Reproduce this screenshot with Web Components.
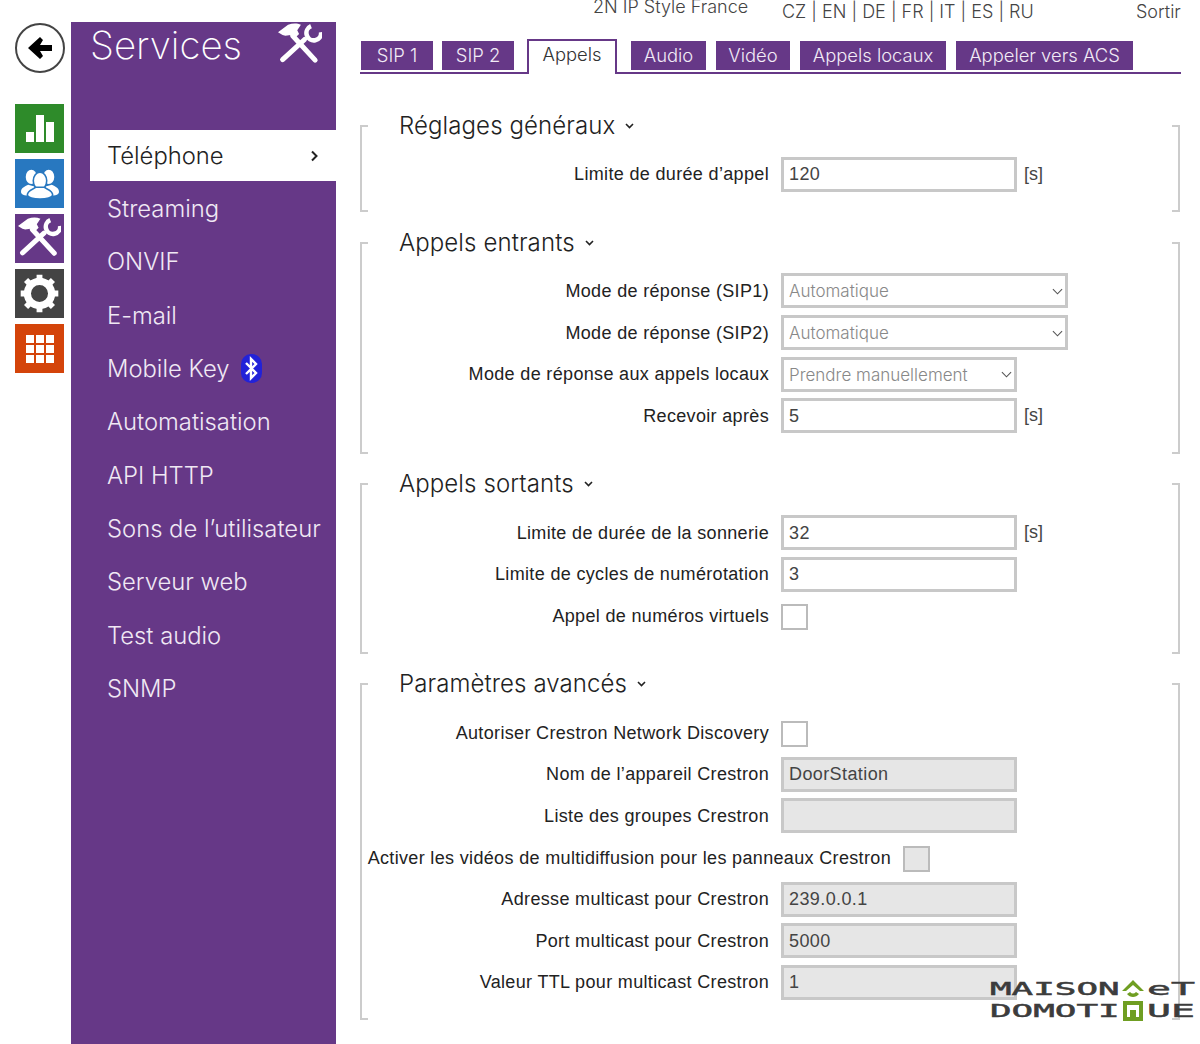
<!DOCTYPE html>
<html lang="fr">
<head>
<meta charset="utf-8">
<title>Services - Appels</title>
<style>
  html, body { margin: 0; height: 1044px; overflow: hidden; background: #fff; }
  body { display: flex; font-family: "Liberation Sans", Arial, sans-serif; color: #222; }
</style>
</head>
<body>
<x-rail></x-rail>
<x-side-nav title-text="Services"></x-side-nav>
<x-main>
  <x-top-bar></x-top-bar>
  <x-tabs></x-tabs>
  <x-section heading="Réglages généraux">
    <x-row label="Limite de durée d’appel" value="120" unit="[s]"></x-row>
  </x-section>
  <x-section heading="Appels entrants">
    <x-row label="Mode de réponse (SIP1)" value="Automatique" kind="select" size="wide"></x-row>
    <x-row label="Mode de réponse (SIP2)" value="Automatique" kind="select" size="wide"></x-row>
    <x-row label="Mode de réponse aux appels locaux" value="Prendre manuellement" kind="select"></x-row>
    <x-row label="Recevoir après" value="5" unit="[s]"></x-row>
  </x-section>
  <x-section heading="Appels sortants">
    <x-row label="Limite de durée de la sonnerie" value="32" unit="[s]"></x-row>
    <x-row label="Limite de cycles de numérotation" value="3"></x-row>
    <x-row label="Appel de numéros virtuels" kind="check"></x-row>
  </x-section>
  <x-section heading="Paramètres avancés">
    <x-row label="Autoriser Crestron Network Discovery" kind="check"></x-row>
    <x-row label="Nom de l’appareil Crestron" value="DoorStation" disabled></x-row>
    <x-row label="Liste des groupes Crestron" value="" disabled></x-row>
    <x-row label="Activer les vidéos de multidiffusion pour les panneaux Crestron" kind="check" disabled long></x-row>
    <x-row label="Adresse multicast pour Crestron" value="239.0.0.1" disabled></x-row>
    <x-row label="Port multicast pour Crestron" value="5000" disabled></x-row>
    <x-row label="Valeur TTL pour multicast Crestron" value="1" disabled></x-row>
  </x-section>
</x-main>
<x-logo></x-logo>

<script>
const TOOLS_ICON = `
  <svg viewBox="0 0 48 48" fill="currentColor" aria-hidden="true">
    <path d="M0 10 11 2c5-2 10-2 14 0l-4 6 2 4-5 5-4-4-6 1-3-1z"/>
    <path d="M16 14 40.500 40.500" fill="none" stroke="currentColor" stroke-width="5.5" stroke-linecap="round"/>
    <path d="M5 40 29 18" fill="none" stroke="currentColor" stroke-width="5.5" stroke-linecap="round"/>
    <path d="M36 3.500A8 8 0 1 0 47 10" fill="none" stroke="currentColor" stroke-width="5"/>
  </svg>`;

const GEAR_ICON = `
  <svg viewBox="0 0 48 48" aria-hidden="true">
    <circle cx="24" cy="24" r="13.500" fill="none" stroke="#fff" stroke-width="8"/>
    <path d="M24 3v8M24 37v8M3 24h8M37 24h8M9 9l6 6M33 33l6 6M39 9l-6 6M15 33l-6 6" stroke="#fff" stroke-width="6.500"/>
  </svg>`;

const USERS_ICON = `
  <svg class="users" viewBox="0 0 48 48" fill="#fff" aria-hidden="true">
    <ellipse cx="13" cy="15" rx="7" ry="9"/>
    <ellipse cx="35" cy="15" rx="7" ry="9"/>
    <path d="M0 34c0-6 6-7 9-9l8 2-2 12C7 39 0 38 0 34zM48 34c0-6-6-7-9-9l-8 2 2 12c8 0 15-1 15-5z"/>
    <ellipse cx="24" cy="20" rx="8.500" ry="11" stroke="#2878c0" stroke-width="2"/>
    <path d="M8 38c0-6 7-7 11-10h10c4 3 11 4 11 10 0 3-8 5-16 5S8 41 8 38z" stroke="#2878c0" stroke-width="2"/>
  </svg>`;

class XRail extends HTMLElement {
  constructor() {
    super();
    this.attachShadow({ mode: 'open' });
    this.shadowRoot.innerHTML = `
      <style>
        :host { display: flex; flex-direction: column; align-items: flex-start; width: 71px; flex: none; padding: 23px 0 0 15px; box-sizing: border-box; }
        .back { width: 50px; height: 50px; box-sizing: border-box; border: 2px solid #444; border-radius: 50%; display: flex; align-items: center; justify-content: center; margin-bottom: 31px; }
        .back svg { width: 26px; height: 26px; }
        .tile { width: 49px; height: 49px; margin-bottom: 6px; display: flex; align-items: center; justify-content: center; color: #fff; }
        .tile svg { width: 43px; height: 43px; }
        .tile svg.users { width: 38px; height: 38px; }
        .green { background: #2e8b2a; } .blue { background: #2878c0; }
        .purple { background: #663887; } .dark { background: #444; } .orange { background: #d4440a; }
        .grid { display: grid; grid-template-columns: repeat(3, 8px); grid-auto-rows: 8px; gap: 2px; }
        .grid i { background: #fff; }
        .bars { display: flex; align-items: flex-end; gap: 2px; height: 27px; }
        .bars i { width: 8px; background: #fff; }
      </style>
      <div class="back">
        <svg viewBox="0 0 26 26"><path d="M1 13 13 2l3 3-3 5h12v6H13l3 5-3 3z" fill="#000"/></svg>
      </div>
      <div class="tile green"><div class="bars"><i style="height:10px"></i><i style="height:27px"></i><i style="height:20px"></i></div></div>
      <div class="tile blue">${USERS_ICON}</div>
      <div class="tile purple">${TOOLS_ICON}</div>
      <div class="tile dark">${GEAR_ICON}</div>
      <div class="tile orange"><div class="grid">${'<i></i>'.repeat(9)}</div></div>
    `;
  }
}

class XSideNav extends HTMLElement {
  constructor() {
    super();
    this.attachShadow({ mode: 'open' });
    const items = ['Streaming', 'ONVIF', 'E-mail', 'Mobile Key', 'Automatisation', 'API HTTP', 'Sons de l’utilisateur', 'Serveur web', 'Test audio', 'SNMP'];
    this.shadowRoot.innerHTML = `
      <style>
        :host { display: block; width: 265px; flex: none; margin-top: 22px; background: #663887; color: #fff; height: 1022px; font-family: Inter, "Liberation Sans", sans-serif; font-weight: 300; }
        header { display: flex; justify-content: space-between; align-items: center; padding: 0 14px 0 19px; height: 46px; }
        h1 { margin: 0; font-size: 38.4px; font-weight: 200; line-height: 46px; }
        header svg { width: 44px; height: 44px; }
        nav { margin: 62px 0 0 19px; }
        .item { height: 53.35px; display: flex; align-items: center; padding-left: 17px; font-size: 23.8px; color: #f0e8f4; }
        .item.active { background: #fff; color: #222; height: 51px; margin-bottom: 0.7px; justify-content: space-between; padding-right: 17px; }
        .item.active svg { width: 9px; height: 12px; }
        .bt { width: 21px; height: 29px; margin-left: 12px; }
      </style>
      <header><h1>${this.getAttribute('title-text')}</h1>${TOOLS_ICON}</header>
      <nav>
        <div class="item active">Téléphone
          <svg viewBox="0 0 9 12"><path d="M2 1.500 6.500 6 2 10.500" fill="none" stroke="#222" stroke-width="2"/></svg>
        </div>
        ${items.map(name => `<div class="item">${name}${name === 'Mobile Key' ? `
          <svg class="bt" viewBox="0 0 21 29"><rect width="21" height="29" rx="10" fill="#2222d8"/><path d="M5 9l10 10-5 5V5l5 5L5 20" fill="none" stroke="#fff" stroke-width="2.400"/></svg>` : ''}</div>`).join('')}
      </nav>
    `;
  }
}

class XMain extends HTMLElement {
  constructor() {
    super();
    this.attachShadow({ mode: 'open' });
    this.shadowRoot.innerHTML = `
      <style>:host { display: block; width: 821px; margin-left: 24px; flex: none; }</style>
      <slot></slot>
    `;
  }
}

class XTopBar extends HTMLElement {
  constructor() {
    super();
    this.attachShadow({ mode: 'open' });
    this.shadowRoot.innerHTML = `
      <style>
        :host { display: flex; height: 39px; font-size: 18px; color: #444; font-weight: 300; font-family: Inter, "Liberation Sans", sans-serif; }
        span { line-height: 22px; white-space: nowrap; }
        .site { margin: -4px 0 0 233px; width: 189px; }
        .lang { margin-top: 1px; width: 354px; }
        .out { margin-top: 1px; }
      </style>
      <span class="site">2N IP Style France</span>
      <span class="lang">CZ | EN | DE | FR | IT | ES | RU</span>
      <span class="out">Sortir</span>
    `;
  }
}

class XTabs extends HTMLElement {
  constructor() {
    super();
    this.attachShadow({ mode: 'open' });
    const tabs = [['SIP 1', 72, 9], ['SIP 2', 72, 13], ['Appels', 90, 14, true], ['Audio', 75, 10], ['Vidéo', 74, 10], ['Appels locaux', 146, 10], ['Appeler vers ACS', 177, 0]];
    this.shadowRoot.innerHTML = `
      <style>
        :host { display: flex; align-items: flex-end; height: 35px; box-sizing: border-box; border-bottom: 2px solid #663887; padding-left: 1px; font-family: Inter, "Liberation Sans", sans-serif; font-weight: 300; font-size: 18.4px; }
        .tab { height: 29px; margin-bottom: 2px; padding-bottom: 2px; background: #663887; color: #f2ebf6; display: flex; align-items: center; justify-content: center; box-sizing: border-box; white-space: nowrap; }
        .tab.on { height: 35px; margin-bottom: -2px; padding-bottom: 8px; background: #fff; color: #333; border: 2px solid #663887; border-bottom: 0; }
      </style>
      ${tabs.map(([name, w, gap, on]) => `<div class="tab${on ? ' on' : ''}" style="width:${w}px;margin-right:${gap}px">${name}</div>`).join('')}
    `;
  }
}

class XSection extends HTMLElement {
  constructor() {
    super();
    this.attachShadow({ mode: 'open' });
    this.shadowRoot.innerHTML = `
      <style>
        :host { display: flow-root; position: relative; margin-top: 29.3px; padding: 0 0 17.2px; }
        :host(:first-of-type) { margin-top: 51px; }
        .bracket { position: absolute; top: 0; bottom: 0; width: 6px; border: solid #ccc; border-width: 2px 0; }
        .left { left: 0; border-left-width: 2px; }
        .right { right: 1px; border-right-width: 2px; }
        h2 { margin: -13px 0 13.5px 39px; height: 28px; font: 300 24px/28px Inter, "Liberation Sans", sans-serif; letter-spacing: 0.1px; color: #222; display: flex; align-items: center; gap: 10px; }
        h2 svg { width: 9px; height: 6px; }
      </style>
      <div class="bracket left"></div><div class="bracket right"></div>
      <h2>${this.getAttribute('heading')}
        <svg viewBox="0 0 9 6"><path d="M1 1l3.500 3.500L8 1" fill="none" stroke="#222" stroke-width="1.600"/></svg>
      </h2>
      <slot></slot>
    `;
  }
}

class XRow extends HTMLElement {
  constructor() {
    super();
    this.attachShadow({ mode: 'open' });
    const kind = this.getAttribute('kind') || 'text';
    const value = this.getAttribute('value') || '';
    const unit = this.getAttribute('unit');
    const off = this.hasAttribute('disabled') ? ' off' : '';
    const wide = this.getAttribute('size') === 'wide' ? ' wide' : '';
    let control;
    if (kind === 'check') {
      control = `<div class="check${off}"></div>`;
    } else if (kind === 'select') {
      control = `<div class="field select${wide}">${value}
        <svg viewBox="0 0 12 7"><path d="M1 1l5 5 5-5" fill="none" stroke="#555" stroke-width="1.200"/></svg></div>`;
    } else {
      control = `<div class="field${off}">${value}</div>`;
    }
    this.shadowRoot.innerHTML = `
      <style>
        :host { display: flex; align-items: center; height: 41.67px; }
        .label { width: ${this.hasAttribute('long') ? 531 : 409}px; flex: none; text-align: right; white-space: nowrap; font-size: 18px; letter-spacing: 0.34px; color: #222; padding-top: 1px; }
        .field { margin-left: 12px; width: 236px; height: 35px; box-sizing: border-box; border: 3px solid #c8c8c8; padding: 1px 5px 0; display: flex; align-items: center; justify-content: space-between; font-size: 18px; letter-spacing: 0.4px; color: #444; background: #fff; }
        .field.off { background: #e6e6e6; }
        .select { color: #888; font-family: Inter, "Liberation Sans", sans-serif; font-weight: 300; font-size: 17px; letter-spacing: 0; }
        .wide { width: 287px; }
        .select svg { width: 11px; height: 7px; margin-right: -3px; }
        .check { margin: 2px 0 0 12px; width: 27px; height: 26px; box-sizing: border-box; border: 2px solid #bbb; background: #fff; }
        .check.off { background: #e6e6e6; }
        .unit { margin-left: 7px; font-size: 18px; color: #444; }
      </style>
      <div class="label">${this.getAttribute('label')}</div>
      ${control}
      ${unit ? `<div class="unit">${unit}</div>` : ''}
    `;
  }
}

// watermark over the bottom right corner
class XLogo extends HTMLElement {
  constructor() {
    super();
    this.attachShadow({ mode: 'open' });
    this.shadowRoot.innerHTML = `
      <style>
        :host { position: absolute; left: 990px; top: 978px; width: 206px; font: 400 18.5px/22px "DejaVu Sans Mono", monospace; color: #3c3c3c; -webkit-text-stroke: 0.5px #3c3c3c; }
        .line { display: flex; align-items: center; height: 22px; }
        .t { display: inline-block; transform-origin: 0 50%; transform: scaleX(var(--s)); width: var(--w); white-space: nowrap; }
        svg { flex: none; margin-right: 2px; }
      </style>
      <div class="line"><span class="t" style="--w:131px;--s:1.94">MAISON</span>
        <svg width="24" height="20" viewBox="0 0 24 20"><path d="M12 1 23 12h-4L12 6l-7 6H1z" fill="#6f9e22"/><path d="M6 15c3 4 9 4 12 0l-3-2c-2 2-4 2-6 0z" fill="#6f9e22"/></svg>
        <span class="t" style="--w:48px;--s:2.15">eT</span></div>
      <div class="line"><span class="t" style="--w:131px;--s:1.94">DOMOTI</span>
        <svg width="24" height="20" viewBox="0 0 24 20"><path d="M2 0h20v20H2z" fill="#6f9e22"/><path d="M6 4h12v12H6z" fill="#fff"/><path d="M9 9h6v7H9z" fill="#6f9e22"/></svg>
        <span class="t" style="--w:48px;--s:2.15">UE</span></div>
    `;
  }
}

customElements.define('x-rail', XRail);
customElements.define('x-side-nav', XSideNav);
customElements.define('x-main', XMain);
customElements.define('x-top-bar', XTopBar);
customElements.define('x-tabs', XTabs);
customElements.define('x-section', XSection);
customElements.define('x-row', XRow);
customElements.define('x-logo', XLogo);
</script>
</body>
</html>
